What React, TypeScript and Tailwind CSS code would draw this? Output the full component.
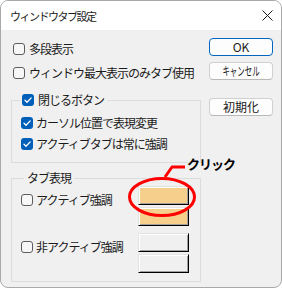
import React from "react";

const FONT = "font-['Noto_Sans_CJK_JP',sans-serif]";

const Check: React.FC<{ checked?: boolean }> = ({ checked }) =>
  checked ? (
    <span className="w-[12px] h-[12px] rounded-[3px] bg-[#005fb8] flex items-center justify-center shrink-0">
      <svg width="12" height="12" viewBox="0 0 12 12" fill="none">
        <path d="M3 6.3 L5 8.2 L9.2 3.9" stroke="#fff" strokeWidth="1.3" strokeLinecap="round" strokeLinejoin="round" />
      </svg>
    </span>
  ) : (
    <span className="w-[12px] h-[12px] rounded-[3px] border border-[#5c5c5c] bg-[#f7f7f7] shrink-0" />
  );

const Swatch: React.FC<{ color: string }> = ({ color }) => (
  <div
    className={`w-[51px] h-[19px] border border-t-[#e3e3e3] border-l-[#e3e3e3] border-b-black border-r-black shadow-[inset_1px_1px_#ffffff,inset_-1px_-1px_#a0a0a0] ${color}`}
  />
);

const Button: React.FC<{ primary?: boolean; children: React.ReactNode }> = ({ primary, children }) => (
  <div
    className={`w-[64px] h-[18px] rounded-[4px] bg-[#fdfdfd] flex items-center justify-center text-[12px] leading-[14px] text-[#1b1b1b] border ${
      primary ? "border-[#0067c0]" : "border-[#d0d0d0] border-b-[#b8b8b8]"
    }`}
  >
    {children}
  </div>
);

export default function App() {
  const text = "text-[12px] leading-[14px] tracking-[-1px] text-[#1b1b1b] whitespace-nowrap";

  return (
    <div className={`relative w-[282px] h-[289px] bg-white ${FONT}`}>
      <div className="w-[282px] h-[288px] rounded-[8px] border border-[#a9a9a9] overflow-hidden flex flex-col bg-[#f0f0f0]">
        {/* Title bar */}
        <div className="h-[29px] shrink-0 bg-white flex items-center justify-between pl-[9px] pr-[8px]">
          <span className="text-[11px] leading-[14px] tracking-[-1.5px] text-[#1b1b1b]">ウィンドウタブ設定</span>
          <svg width="11" height="11" viewBox="0 0 11 11" fill="none">
            <path d="M0.5 0.5 L10.5 10.5 M10.5 0.5 L0.5 10.5" stroke="#1b1b1b" strokeWidth="1" />
          </svg>
        </div>

        <div className="flex pl-[10px]">
          {/* Left column */}
          <div className="w-[190px] flex flex-col pt-[7px]">
            <div className="h-[24px] flex items-center gap-[4px] pl-[2px]">
              <Check />
              <span className={text}>多段表示</span>
            </div>
            <div className="h-[24px] flex items-center gap-[4px] pl-[2px]">
              <Check />
              <span className={text}>ウィンドウ最大表示のみタブ使用</span>
            </div>

            <fieldset className="mt-[8px] border border-[#dcdcdc] pl-[9px] pt-[5px] pb-[8px]">
              <legend className="h-[14px] flex items-center gap-[4px] pl-[1px] pr-[3px]">
                <Check checked />
                <span className={text}>閉じるボタン</span>
              </legend>
              <div className="h-[21px] flex items-center gap-[3px]">
                <Check checked />
                <span className={text}>カーソル位置で表現変更</span>
              </div>
              <div className="h-[21px] flex items-center gap-[3px]">
                <Check checked />
                <span className={text}>アクティブタブは常に強調</span>
              </div>
            </fieldset>

            <fieldset className="mt-[8px] border border-[#dcdcdc] pl-[9px] pt-[1px] pb-[8px] flex flex-col gap-[7px]">
              <legend className="h-[14px] ml-[3px] px-[3px] flex items-center">
                <span className={text}>タブ表現</span>
              </legend>
              <div className="flex items-start">
                <div className="w-[117px] h-[14px] mt-[7px] flex items-center gap-[3px]">
                  <Check />
                  <span className={text}>アクティブ強調</span>
                </div>
                <div className="flex flex-col gap-[2px]">
                  <Swatch color="bg-[#f5cf8b]" />
                  <Swatch color="bg-[#f5cf8b]" />
                </div>
              </div>
              <div className="flex items-start">
                <div className="w-[117px] h-[14px] mt-[7px] flex items-center gap-[3px]">
                  <Check />
                  <span className={text}>非アクティブ強調</span>
                </div>
                <div className="flex flex-col gap-[2px]">
                  <Swatch color="bg-[#f0f0f0]" />
                  <Swatch color="bg-[#f0f0f0]" />
                </div>
              </div>
            </fieldset>
          </div>

          {/* Right column */}
          <div className="flex flex-col ml-[8px] pt-[8px]">
            <Button primary>OK</Button>
            <div className="mt-[6px]">
              <Button>
                <span className="inline-block text-[12px] scale-x-[0.62]">キャンセル</span>
              </Button>
            </div>
            <div className="mt-[18px]">
              <Button>初期化</Button>
            </div>
          </div>
        </div>
      </div>

      {/* Annotation overlay */}
      <svg className="absolute left-0 top-0 pointer-events-none" width="282" height="289" viewBox="0 0 282 289" fill="none">
        <ellipse cx="162" cy="197" rx="32.5" ry="18.5" stroke="#ff0000" strokeWidth="3" />
        <path d="M165 177 L172 167 L185 167" stroke="#ff0000" strokeWidth="3" strokeLinejoin="round" />
      </svg>
      <span className="absolute left-[187px] top-[157px] text-[13px] leading-[14px] tracking-[-1px] font-bold text-black">
        クリック
      </span>
    </div>
  );
}
